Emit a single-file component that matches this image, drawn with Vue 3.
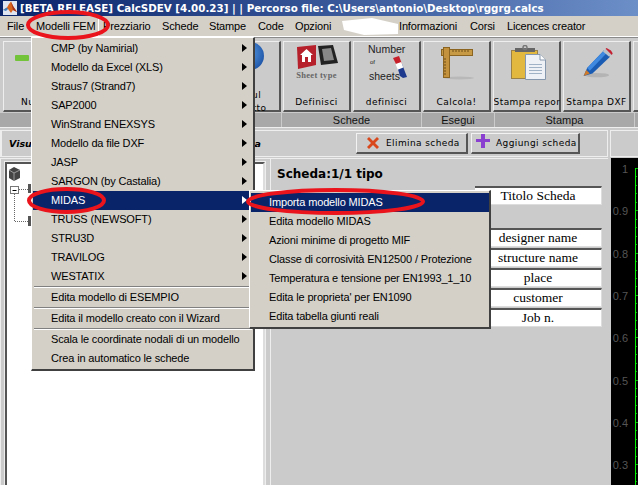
<script setup>
const menubar = [
  { t: 'File', w: 29 },
  { t: 'Modelli FEM', w: 67, active: true },
  { t: 'Prezziario', w: 59 },
  { t: 'Schede', w: 47 },
  { t: 'Stampe', w: 49 },
  { t: 'Code', w: 37 },
  { t: 'Opzioni', w: 104 },
  { t: 'Informazioni', w: 71 },
  { t: 'Corsi', w: 37 },
  { t: 'Licences creator', w: 100 }
]
const mainMenu = [
  { t: 'CMP (by Namirial)', a: 1 },
  { t: 'Modello da Excel (XLS)', a: 1 },
  { t: 'Straus7 (Strand7)', a: 1 },
  { t: 'SAP2000', a: 1 },
  { t: 'WinStrand ENEXSYS', a: 1 },
  { t: 'Modello da file DXF', a: 1 },
  { t: 'JASP', a: 1 },
  { t: 'SARGON (by Castalia)', a: 1 },
  { t: 'MIDAS', a: 1, sel: 1 },
  { t: 'TRUSS (NEWSOFT)', a: 1 },
  { t: 'STRU3D', a: 1 },
  { t: 'TRAVILOG', a: 1 },
  { t: 'WESTATIX', a: 1, sep: 1 },
  { t: 'Edita modello di ESEMPIO', sep: 1 },
  { t: 'Edita il modello creato con il Wizard', sep: 1 },
  { t: 'Scala le coordinate nodali di un modello' },
  { t: 'Crea in automatico le schede' }
]
const subMenu = [
  { t: 'Importa modello MIDAS', sel: 1 },
  { t: 'Edita modello MIDAS' },
  { t: 'Azioni minime di progetto MIF' },
  { t: 'Classe di corrosività EN12500 / Protezione' },
  { t: 'Temperatura e tensione per EN1993_1_10' },
  { t: "Edita le proprieta' per EN1090" },
  { t: 'Edita tabella giunti reali' }
]
const fields = ['designer name', 'structure name', 'place', 'customer', 'Job n.']
const yLabels = ['1', '0.9', '0.8', '0.7', '0.6', '0.5', '0.4', '0.3'].map((t, i) => ({ t, y: 10 + i * 42.3 }))
const minorTicks = Array.from({ length: 38 }, (_, i) => ({ y: Math.round(10 + i * 8.46), major: i % 5 === 0 }))
</script>

<template>
  <div class="win">
    <div class="title">
      <svg class="logo" width="14" height="14" viewBox="0 0 14 14">
        <rect width="14" height="14" fill="#dfe6f2" />
        <path d="M0 9 L4 6.5 L6 3 L8 0.5 L10 5 L14 11 L10 9 L8 12 L5 8 Z" fill="#d9641c" />
        <path d="M8 0.5 L10 5 L14 11 L10 9 L9 5 Z" fill="#a3321a" />
        <path d="M0 9 L4 6.5 L5 8 L3 10 Z" fill="#3f7fc0" />
      </svg>
      <span class="title-text">[BETA RELEASE] CalcSDEV [4.00.23] | | Percorso file: C:\Users\antonio\Desktop\rggrg.calcs</span>
    </div>

    <div class="menubar">
      <span v-for="m in menubar" :key="m.t" class="mb-item" :class="{ active: m.active }" :style="{ width: m.w + 'px' }">{{ m.t }}</span>
    </div>

    <div class="toolbar">
      <div class="tbtn"><div class="ticon"><span class="green"></span></div><div class="tlabel">Nuovo</div></div>
      <div class="tbtn"></div>
      <div class="tbtn"></div>
      <div class="tbtn">
        <div class="ticon"><span class="globe"></span></div>
        <div class="tlabel two">Modul<br />Oggetto</div>
      </div>
      <div class="tbtn">
        <div class="ticon">
          <svg width="44" height="24" viewBox="0 0 44 24">
            <path d="M2 2 L21 0 L21 20 L3 24 Z" fill="#b5202a" />
            <path d="M11.5 4 L18 10 L16 10 L16 17 L13 17 L13 12 L10 12 L10 17 L7 17 L7 10 L5 10 Z" fill="#fff" />
            <path d="M23 1 L38 0 L43 18 L26 20 Z" fill="#222" />
            <path d="M27 4 L36 3 L39 15 L29 16 Z" fill="#888" />
          </svg>
          <span class="sheet-type">Sheet type</span>
        </div>
        <div class="tlabel">Definisci</div>
      </div>
      <div class="tbtn">
        <div class="ticon numsheets">
          <span class="n1">Number</span><span class="n2">of</span><span class="n3">sheets</span>
          <svg class="arrows" width="16" height="24" viewBox="0 0 16 24">
            <path d="M1 2 L7 0 L10 8 L7 10 L4 8 Z" fill="#c8202a" />
            <path d="M5 10 L10 8 L15 21 L11 22 L8 20 Z" fill="#1e3a8e" />
            <rect x="4.5" y="7" width="6" height="6" fill="#fff" transform="rotate(-20 7 10)" />
          </svg>
        </div>
        <div class="tlabel">definisci</div>
      </div>
      <div class="tbtn">
        <div class="ticon">
          <svg width="36" height="36" viewBox="0 0 36 36">
            <ellipse cx="20" cy="33" rx="15" ry="1.5" fill="#b8b8b8" />
            <rect x="2.5" y="4.5" width="31" height="6" fill="#c79a45" stroke="#8a6420" />
            <rect x="4.5" y="2.5" width="6" height="30" fill="#c4913c" stroke="#8a6420" />
            <path d="M14 5v2M17 5v2M20 5v2M23 5v2M26 5v2M29 5v2M5 14h2M5 17h2M5 20h2M5 23h2M5 26h2M5 29h2" stroke="#6e4e18" />
          </svg>
        </div>
        <div class="tlabel">Calcola!</div>
      </div>
      <div class="tbtn">
        <div class="ticon">
          <svg width="40" height="38" viewBox="0 0 40 38">
            <rect x="4.5" y="5.5" width="26" height="28" fill="#e2b93e" stroke="#9a8148" />
            <rect x="8" y="3" width="20" height="4" fill="#666" />
            <circle cx="18" cy="2.5" r="2" fill="none" stroke="#777" stroke-width="1.5" />
            <path d="M18.5 9.5 H33 L38.5 15 V34.5 H18.5 Z" fill="#eef2f6" stroke="#8597ac" />
            <path d="M33 9.5 L33 15 L38.5 15" fill="#fff" stroke="#8597ac" />
            <path d="M22 19.5h13M22 22.5h13M22 25.5h13M22 28.5h13" stroke="#9fb2c6" />
          </svg>
        </div>
        <div class="tlabel">Stampa report</div>
      </div>
      <div class="tbtn">
        <div class="ticon">
          <svg width="38" height="36" viewBox="0 0 38 36">
            <g transform="translate(3 2) scale(.88)">
              <ellipse cx="18" cy="32" rx="14" ry="2.5" fill="#b4b4b4" />
              <path d="M3 33 L7 24 L26 4 L33 11 L13 30 Z" fill="#1a5cb4" />
              <path d="M7 24 L26 4 L29 7 L10 27 Z" fill="#3f8ae0" />
              <path d="M3 33 L6 26 L10 30 Z" fill="#cf7a28" />
              <path d="M25 5 L29 1 L34 4 L36 7 L32 11 Z" fill="#b9c0c8" />
              <path d="M29 1 L34 4 L36 7 L35 9 L28 2 Z" fill="#c42030" />
            </g>
          </svg>
        </div>
        <div class="tlabel">Stampa DXF</div>
      </div>
      <div class="tbtn"></div>
    </div>

    <div class="bands">
      <div class="band b0"></div>
      <div class="band b1">Schede</div>
      <div class="band b2">Esegui</div>
      <div class="band b3">Stampa</div>
      <div class="band b4"></div>
    </div>

    <div class="barrow">
      <div class="bar">
        <div class="bar-title"><span>Visualizzazione</span><span>scheda</span></div>
        <div class="bar-actions">
          <div class="act el">
            <svg width="14" height="14" viewBox="0 0 14 14"><path d="M1 3 L3 1 L7 5 L11 1 L13 3 L9 7 L13 11 L11 13 L7 9 L3 13 L1 11 L5 7 Z" fill="#d9481c" /></svg>
            <span>Elimina scheda</span>
          </div>
          <div class="act ag">
            <svg class="raise" width="14" height="14" viewBox="0 0 14 14"><path d="M5 0 H9 V5 H14 V8 H9 V14 H5 V8 H0 V5 H5 Z" fill="#8a3fd0" /></svg>
            <span>Aggiungi scheda</span>
          </div>
        </div>
      </div>
      <div class="bar-right"></div>
    </div>

    <div class="main">
      <div class="tree">
        <div class="tree-inner">
          <svg width="30" height="70" viewBox="1 0 30 70">
            <path d="M3 3 L8 0 L14 3 L14 11 L8 14 L3 11 Z" fill="#444" />
            <path d="M3 3 L8 6 L14 3 M8 6 V14" fill="none" stroke="#999" />
            <path d="M8.5 27 V54.5 H22 M13 22.5 H22" stroke="#666" stroke-dasharray="1 1" fill="none" />
            <rect x="4.5" y="19.5" width="8" height="7" fill="#fff" stroke="#777" />
            <path d="M6.5 23.5 H10.5" stroke="#000" />
            <rect x="22" y="17" width="8" height="9" fill="#555" />
            <rect x="22" y="49" width="8" height="10" fill="#555" />
          </svg>
        </div>
      </div>
      <div class="sheet">
        <div class="sheet-title">Scheda:1/1 tipo</div>
        <div class="fields">
          <div class="field first">Titolo Scheda</div>
          <div v-for="f in fields" :key="f" class="field">{{ f }}</div>
        </div>
      </div>
      <div class="chart">
        <svg width="27" height="327" viewBox="0 0 27 327">
          <text v-for="l in yLabels" :key="l.t" x="17" :y="l.y + 5" class="ylab" text-anchor="end">{{ l.t }}</text>
          <rect x="24" y="10" width="1" height="317" fill="#00f000" />
          <rect x="24" y="10" width="3" height="1" fill="#00f000" />
          <rect v-for="k in minorTicks" :key="k.y" x="25" :y="k.y" :width="k.major ? 2 : 1" height="1" fill="#00b000" />
        </svg>
      </div>
    </div>

    <div class="menu main-menu">
      <template v-for="m in mainMenu" :key="m.t">
        <div class="mi" :class="{ sel: m.sel }">
          <span>{{ m.t }}</span>
          <i v-if="m.a" class="arrow"></i>
        </div>
        <div v-if="m.sep" class="sep"></div>
      </template>
    </div>

    <div class="menu sub-menu">
      <div v-for="m in subMenu" :key="m.t" class="mi" :class="{ sel: m.sel }"><span>{{ m.t }}</span></div>
    </div>

    <svg class="marks" width="638" height="485" viewBox="0 0 638 485">
      <path d="M342 21 L372 18 L398 24 L398 34 L364 35 L344 30 Z" fill="#fff" />
      <ellipse cx="68" cy="25" rx="40" ry="13" />
      <ellipse cx="66.5" cy="200.5" rx="37.5" ry="11.5" />
      <ellipse cx="335.5" cy="201.5" rx="87.5" ry="11.5" />
    </svg>
  </div>
</template>

<style>
body { margin: 0; background: #ccc; }
</style>

<style scoped>
.win {
  position: relative;
  width: 638px;
  height: 485px;
  overflow: hidden;
  background: #cbcbcb;
  font-family: "Liberation Sans", Arial, sans-serif;
  color: #000;
}
.title {
  height: 16px;
  display: flex;
  align-items: center;
  padding-left: 3px;
  background: linear-gradient(90deg, #0a246a 0%, #3a5a9c 55%, #6d8fc8 100%);
}
.logo { flex: none; }
.title-text {
  margin-left: 3px;
  color: #fff;
  font: bold 10.3px "DejaVu Sans", sans-serif;
  white-space: nowrap;
}
.menubar {
  height: 20px;
  display: flex;
  background: #d4d0c8;
  border-bottom: 1px solid #8a8a8a;
  padding-left: 2px;
  padding-bottom: 1px;
  box-shadow: inset 0 -1px 0 #fff;
}
.mb-item {
  font-size: 11px;
  letter-spacing: -.15px;
  line-height: 20px;
  padding-left: 5px;
  box-sizing: border-box;
  white-space: nowrap;
  flex: none;
}
.mb-item.active {
  box-shadow: 1px 1px 0 #fff;
}
.toolbar {
  display: flex;
  gap: 2px;
  padding: 3px 0 0 3px;
  height: 71px;
}
.tbtn {
  position: relative;
  width: 68px;
  height: 71px;
  flex: none;
  box-sizing: border-box;
  background: #cbcbcb;
  border-top: 1px solid #eee;
  border-left: 1px solid #eee;
  border-right: 2px solid #555;
  border-bottom: 2px solid #555;
  display: flex;
  flex-direction: column;
  align-items: center;
}
.ticon {
  height: 45px;
  width: 100%;
  flex: none;
  display: flex;
  flex-direction: column;
  align-items: center;
  padding-top: 3px;
  box-sizing: border-box;
  position: relative;
}
.ticon svg { flex: none; }
.tlabel {
  font: 9px/11px "DejaVu Sans", sans-serif;
  letter-spacing: .45px;
  margin-top: 10px;
  white-space: nowrap;
  width: 66px;
  overflow: hidden;
  text-align: center;
  flex: none;
}
.tlabel.two { margin-top: 2px; line-height: 13px; }
.green { flex: none; width: 14px; height: 6px; margin-top: 10px; background: #72c23a; border-radius: 1px; margin-left: -30px; }
.globe { flex: none; width: 28px; height: 28px; margin-top: -3px; border-radius: 50%; background: radial-gradient(circle at 40% 40%, #5aa0e8, #0d3f94); margin-left: 6px; }
.sheet-type { font: bold 8.5px "Liberation Serif", serif; color: #666; letter-spacing: .3px; margin-top: 1px; white-space: nowrap; }
.numsheets { display: block; color: #222; padding: 0; }
.n1 { display: block; font-size: 10.5px; line-height: 12px; padding: 1px 0 0 14px; }
.n2 { display: block; font-size: 6px; line-height: 7px; padding: 4px 0 0 16px; }
.n3 { display: block; font-size: 10.5px; line-height: 12px; padding: 4px 0 0 15px; }
.arrows { position: absolute; left: 38px; top: 14px; }
.bands {
  display: flex;
  gap: 1px;
  height: 14px;
  margin-top: 1px;
  border-bottom: 1px solid #eee;
}
.band {
  background: #a8a8a8;
  font-size: 11px;
  line-height: 14px;
  text-align: center;
  color: #111;
  flex: none;
}
.b0 { width: 281px; }
.b1 { width: 139px; }
.b2 { width: 72px; }
.b3 { width: 139px; }
.b4 { width: 4px; }
.barrow {
  display: flex;
  height: 27px;
  margin-top: 2px;
  gap: 2px;
}
.bar {
  width: 608px;
  flex: none;
  display: flex;
  align-items: center;
  box-sizing: border-box;
  border: 1px solid #eee;
  border-left-width: 2px;
  padding-left: 7px;
  height: 27px;
}
.bar-right { flex: 1; border-left: 1px solid #eee; border-bottom: 1px solid #eee; border-top: 1px solid #eee; }
.bar-title {
  width: 252px;
  flex: none;
  display: flex;
  justify-content: space-between;
  font: italic bold 9.5px "DejaVu Sans", sans-serif;
  white-space: nowrap;
}
.bar-actions { display: flex; gap: 3px; margin-left: 95px; }
.act {
  height: 21px;
  display: flex;
  align-items: center;
  box-sizing: border-box;
  border-top: 1px solid #f2f2f2;
  border-left: 1px solid #f2f2f2;
  border-right: 2px solid #555;
  border-bottom: 2px solid #555;
  font: 9px "DejaVu Sans", sans-serif;
  letter-spacing: .4px;
  white-space: nowrap;
  flex: none;
}
.act svg { flex: none; }
.raise { margin-top: -5px; }
.el { width: 112px; padding-left: 9px; gap: 6px; }
.ag { width: 109px; padding-left: 4px; gap: 6px; }
.main {
  display: flex;
  height: 327px;
  margin-top: 1px;
}
.tree {
  width: 270px;
  flex: none;
  box-sizing: border-box;
  padding: 3px 0 0 2px;
  border-left: 1px solid #eee;
  border-top: 1px solid #eee;
}
.tree-inner {
  height: 100%;
  width: 260px;
  box-sizing: border-box;
  background: #fff;
  border-left: 2px solid #555;
  border-top: 2px solid #555;
  border-right: 2px solid #ddd;
  outline: 1px solid #eee;
  margin-left: 2px;
  padding: 3px 0 0 0;
}
.tree-inner svg { display: block; }
.sheet {
  width: 338px;
  flex: none;
  border-left: 1px solid #eee;
  border-top: 1px solid #eee;
  box-sizing: border-box;
  padding-left: 6px;
  padding-top: 1px;
}
.sheet-title {
  font: bold 12px "DejaVu Sans", sans-serif;
  letter-spacing: 0;
  padding-top: 7px;
  height: 19px;
  box-sizing: content-box;
}
.fields {
  display: flex;
  flex-direction: column;
  gap: 1px;
  margin-left: 198px;
  width: 127px;
}
.field {
  height: 19px;
  flex: none;
  box-sizing: border-box;
  background: #fff;
  border-top: 2px solid #555;
  border-bottom: 1px solid #ddd;
  border-right: 1px solid #ddd;
  font: 13.5px/16px "Liberation Serif", serif;
  text-align: center;
  white-space: nowrap;
}
.field.first { margin-bottom: 22px; }
.chart {
  margin-left: 3px;
  flex: 1;
  background: #000;
  overflow: hidden;
}
.chart svg { display: block; }
.ylab { font: 11px "Liberation Sans", sans-serif; fill: #555; }
.menu {
  position: absolute;
  box-sizing: border-box;
  background: #d4d0c8;
  border-left: 1px solid #fff;
  border-top: 1px solid #fff;
  border-right: 2px solid #404040;
  border-bottom: 2px solid #404040;
}
.main-menu { left: 31px; top: 37px; width: 224px; height: 334px; padding: 1px 0 0 1px; }
.sub-menu { left: 249px; top: 190px; width: 242px; height: 139px; padding: 2px 0 0 1px; }
.mi {
  height: 19px;
  box-sizing: border-box;
  display: flex;
  align-items: center;
  justify-content: space-between;
  padding: 0 6px 2px 18px;
  font-size: 11px;
  letter-spacing: -.15px;
  white-space: nowrap;
}
.sel { background: #0a246a; color: #fff; }
.arrow {
  width: 0;
  height: 0;
  border-left: 5px solid currentColor;
  border-top: 4.5px solid transparent;
  border-bottom: 4.5px solid transparent;
}
.sep { height: 2px; background: #fff; border-top: 1px solid #808080; box-sizing: border-box; margin: 0 1px; }
.marks {
  position: absolute;
  left: 0;
  top: 0;
  pointer-events: none;
}
.marks ellipse { fill: none; stroke: #ea141c; stroke-width: 4; }
</style>
